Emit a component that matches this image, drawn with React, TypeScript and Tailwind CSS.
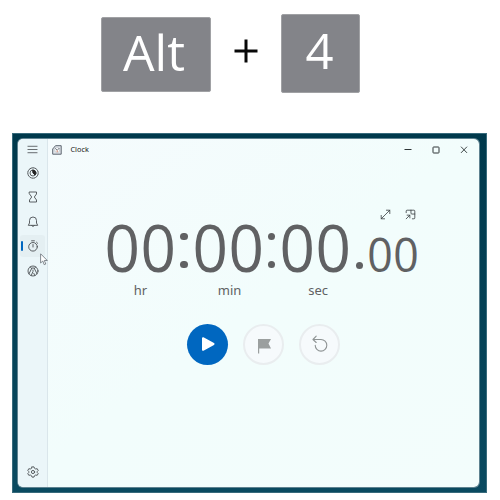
import React from "react";

const digitFont = "font-['Open_Sans','Noto_Sans',sans-serif]";

function Line({ size, children, className = "" }: { size: number; children: React.ReactNode; className?: string }) {
  return (
    <svg width={size} height={size} viewBox="0 0 12 12" fill="none" stroke="currentColor" strokeWidth="0.9" strokeLinecap="round" strokeLinejoin="round" className={className}>
      {children}
    </svg>
  );
}

function NavItem({ active, children }: { active?: boolean; children: React.ReactNode }) {
  return (
    <div className={"relative flex h-[22px] w-[25px] items-center justify-center rounded-[3px] " + (active ? "bg-[#e4eff2]" : "")}>
      {active && <span className="absolute left-[0.5px] top-[6px] h-[10px] w-[2px] rounded-full bg-[#0067c0]" />}
      {children}
    </div>
  );
}

function Group({ label, width }: { label: string; width: string }) {
  return (
    <div className="flex w-[72.6px] flex-col">
      <div className="flex h-[60px] items-center">
        {["0", "0"].map((d, i) => (
          <span key={i} className="flex w-[36.3px] scale-x-[0.94] justify-center text-[66px] leading-[60px]">{d}</span>
        ))}
      </div>
      <span className={"mt-[4.5px] h-5 text-center text-[13px] leading-5 font-['Noto_Sans',sans-serif] " + width}>{label}</span>
    </div>
  );
}

function Colon() {
  return (
    <div className="flex h-[60px] w-[15px] flex-col items-center gap-[20.5px] pt-[17px]">
      <i className="h-[7.5px] w-[7.5px] rounded-full bg-[#606163]" />
      <i className="h-[7.5px] w-[7.5px] rounded-full bg-[#606163]" />
    </div>
  );
}

export default function App() {
  return (
    <div className={"flex h-[500px] w-[500px] flex-col overflow-hidden bg-white " + digitFont}>
      <div className="flex h-[133px] items-start pl-[101px] pt-[14px]">
        <div className="mt-[2.5px] flex h-[75px] w-[110px] items-center justify-center rounded-[2px] border border-[#a0a1a4] bg-[#838489] text-[50px] leading-none text-white">
          <span className="-ml-[4px] -mt-[4px]">Alt</span>
        </div>
        <div className="flex h-[73px] w-[70px] items-center justify-center">
          <svg width="24" height="24" viewBox="0 0 24 24" stroke="#080808" strokeWidth="3">
            <path d="M0.5 12H23.5M12 0.5V23.5" />
          </svg>
        </div>
        <div className="flex h-[79px] w-[79px] items-center justify-center rounded-[2px] border border-[#a0a1a4] bg-[#838489] text-[49px] leading-none text-white">
          <span className="-ml-[2px] -mt-[6px]">4</span>
        </div>
      </div>

      <div className="ml-[11.5px] flex h-[360px] w-[475.5px] border border-[#386b7c] bg-gradient-to-b from-[#00394c] to-[#0a4a60] pl-[5.5px] pt-[5px]">
        <div className="flex h-[348px] w-[461px] overflow-hidden rounded-[5px] bg-gradient-to-br from-[#f5fbfd] via-[#f2fdfc] to-[#f3fdfc] shadow-[0_0_0_1px_#5e8290]">
          <aside className="flex w-[30px] shrink-0 flex-col border-r border-[#dae6eb] bg-[#ebf6f9] pl-[2px] text-[#4b4f52]">
            <div className="-mt-[1px]">
              <NavItem><Line size={11}><path d="M1 2.5H11M1 6H11M1 9.5H11" /></Line></NavItem>
            </div>
            <div className="mt-[2px] flex flex-col gap-[2.4px]">
              <NavItem>
                <Line size={12}><circle cx="6" cy="6" r="5.2" strokeDasharray="1.7 .5" /><circle cx="6" cy="6" r="3" /><path d="M6 3a3 3 0 0 1 2 5L6 6Z" fill="#222" stroke="#222" /></Line>
              </NavItem>
              <NavItem>
                <Line size={12}><path d="M2.5 1H9.5V3L7.3 6L9.5 9V11H2.5V9L4.7 6L2.5 3Z" /></Line>
              </NavItem>
              <NavItem>
                <Line size={12}><path d="M1.5 9L2.5 7V4.5a3.5 3.5 0 0 1 7 0V7l1 2ZM4.7 9.5a1.4 1.4 0 0 0 2.6 0" /></Line>
              </NavItem>
              <NavItem active>
                <Line size={12}><circle cx="6" cy="6.8" r="4.3" /><path d="M6 4.5V7M4.6 .8H7.4M9.5 2.2L10.6 3.3" /></Line>
              </NavItem>
              <NavItem>
                <Line size={12}><circle cx="6" cy="6" r="5" /><path d="M2 8.8L4.6 3.6Q6 1.8 7.4 3.6L10 8.8M4.6 3.6L3.4 1.9M7.4 3.6L8.6 1.9M6 5V6.5L4.2 10.5M7.8 10.5L6.8 8.3" /></Line>
              </NavItem>
            </div>
            <div className="mb-[4px] mt-auto">
              <NavItem>
                <Line size={12}><path d="M5 .9H7L7.5 2.3L8.7 3L10.2 2.7L11.2 4.5L10.2 5.6V6.5L11.2 7.6L10.2 9.3L8.7 9L7.5 9.7L7 11.1H5L4.5 9.7L3.3 9L1.8 9.3L.8 7.6L1.8 6.5V5.6L.8 4.5L1.8 2.7L3.3 3L4.5 2.3Z" /><circle cx="6" cy="6" r="1.6" /></Line>
              </NavItem>
            </div>
          </aside>

          <main className="flex min-w-0 flex-1 flex-col text-[#606163]">
            <header className="flex h-[21px] items-center pl-[4px]">
              <svg width="10" height="10" viewBox="0 0 10 10" fill="none" stroke="#5d6670">
                <path d="M.7 9.2V4L3.5 .7H9.2V9.2Z" fill="#dfe4e9" /><circle cx="5.2" cy="5" r="2.5" fill="#fff" stroke="#a5adb4" strokeWidth=".5" /><path d="M3.3 3.3L5.2 5.3L7.4 3" strokeWidth=".9" /><path d="M5.2 5.5V7.2" stroke="#d47d65" />
              </svg>
              <span className="ml-[8.5px] text-[7.3px] leading-none text-[#222] font-['Noto_Sans',sans-serif]">Clock</span>
              <div className="ml-auto mr-[11.5px] flex items-center gap-[20px] text-[#2e3537]">
                <svg width="8" height="8" viewBox="0 0 8 8" stroke="currentColor"><path d="M.5 3.5H7.5" /></svg>
                <svg width="8" height="8" viewBox="0 0 8 8" fill="none" stroke="currentColor"><rect x="1" y="1" width="6" height="6" rx=".6" /></svg>
                <svg width="8" height="8" viewBox="0 0 8 8" stroke="currentColor" strokeWidth=".9"><path d="M1 .7L7 6.9M7 .7L1 6.9" /></svg>
              </div>
            </header>

            <div className="ml-[332px] mt-[49px] flex h-[11px] gap-[13.5px] text-[#3c4244]">
              <Line size={11}><path d="M1.3 10.7L10.7 1.3M7 1.3H10.7V5M1.3 7V10.7H5" /></Line>
              <Line size={11}><path d="M1.3 4V2.3Q1.3 1.3 2.3 1.3H9.7Q10.7 1.3 10.7 2.3V9.7Q10.7 10.7 9.7 10.7H8M6.5 1.3V4.5Q6.5 5.5 7.5 5.5H10.7M1.3 10.7L5.3 6.7M2.3 6.7H5.3V9.7" /></Line>
            </div>

            <div className="ml-[56px] mt-[-4.5px] flex h-[85px]">
              <Group label="hr" width="w-[73px]" />
              <Colon />
              <Group label="min" width="w-[76px]" />
              <Colon />
              <Group label="sec" width="w-[78px]" />
              <div className="flex h-[60px] w-[15px] items-end justify-center pb-[6.5px]">
                <i className="h-[7.5px] w-[7.5px] rounded-full bg-[#606163]" />
              </div>
              <div className="flex pt-[8px]">
                {["0", "0"].map((d, i) => (
                  <span key={i} className="flex w-[26.2px] scale-x-[0.94] justify-center text-[47.5px] leading-[60px]">{d}</span>
                ))}
              </div>
            </div>

            <div className="ml-[139px] mt-[23px] flex gap-[15px]">
              <button className="flex h-[41px] w-[41px] items-center justify-center rounded-full bg-[#0067c0]">
                <svg width="16" height="16" viewBox="0 0 16 16" fill="#fff" stroke="#fff" strokeWidth="2" strokeLinejoin="round"><path d="M3 2.2L13.5 8L3 13.8Z" /></svg>
              </button>
              <button className="flex h-[41px] w-[41px] items-center justify-center rounded-full border-2 border-[#e9edef] bg-[#f6fafc]">
                <svg width="16" height="18" viewBox="0 0 16 18" fill="#9b9f9f" className="mt-[4px]"><path d="M2 2H15L12.5 6.5L15 11.5H3.2V16.5H2Z" /></svg>
              </button>
              <button className="flex h-[41px] w-[41px] items-center justify-center rounded-full border-2 border-[#e9edef] bg-[#f6fafc]">
                <svg width="16" height="18" viewBox="0 0 16 18" fill="none" stroke="#8f9495" strokeWidth="1.1" strokeLinecap="round" strokeLinejoin="round"><path d="M4.2 1.2L1 4.5L4.2 7.5M1 4.5H9A5.8 5.8 0 1 1 3.2 10.3" /></svg>
              </button>
            </div>
          </main>
        </div>
      </div>

      <svg className="absolute left-[40px] top-[253px]" width="8" height="13" viewBox="0 0 8 13" fill="#fff" stroke="#666d75" strokeWidth=".8">
        <path d="M.6 .8V10L2.8 8L4.2 11.7L5.8 11L4.3 7.5H7.3Z" />
      </svg>
    </div>
  );
}
